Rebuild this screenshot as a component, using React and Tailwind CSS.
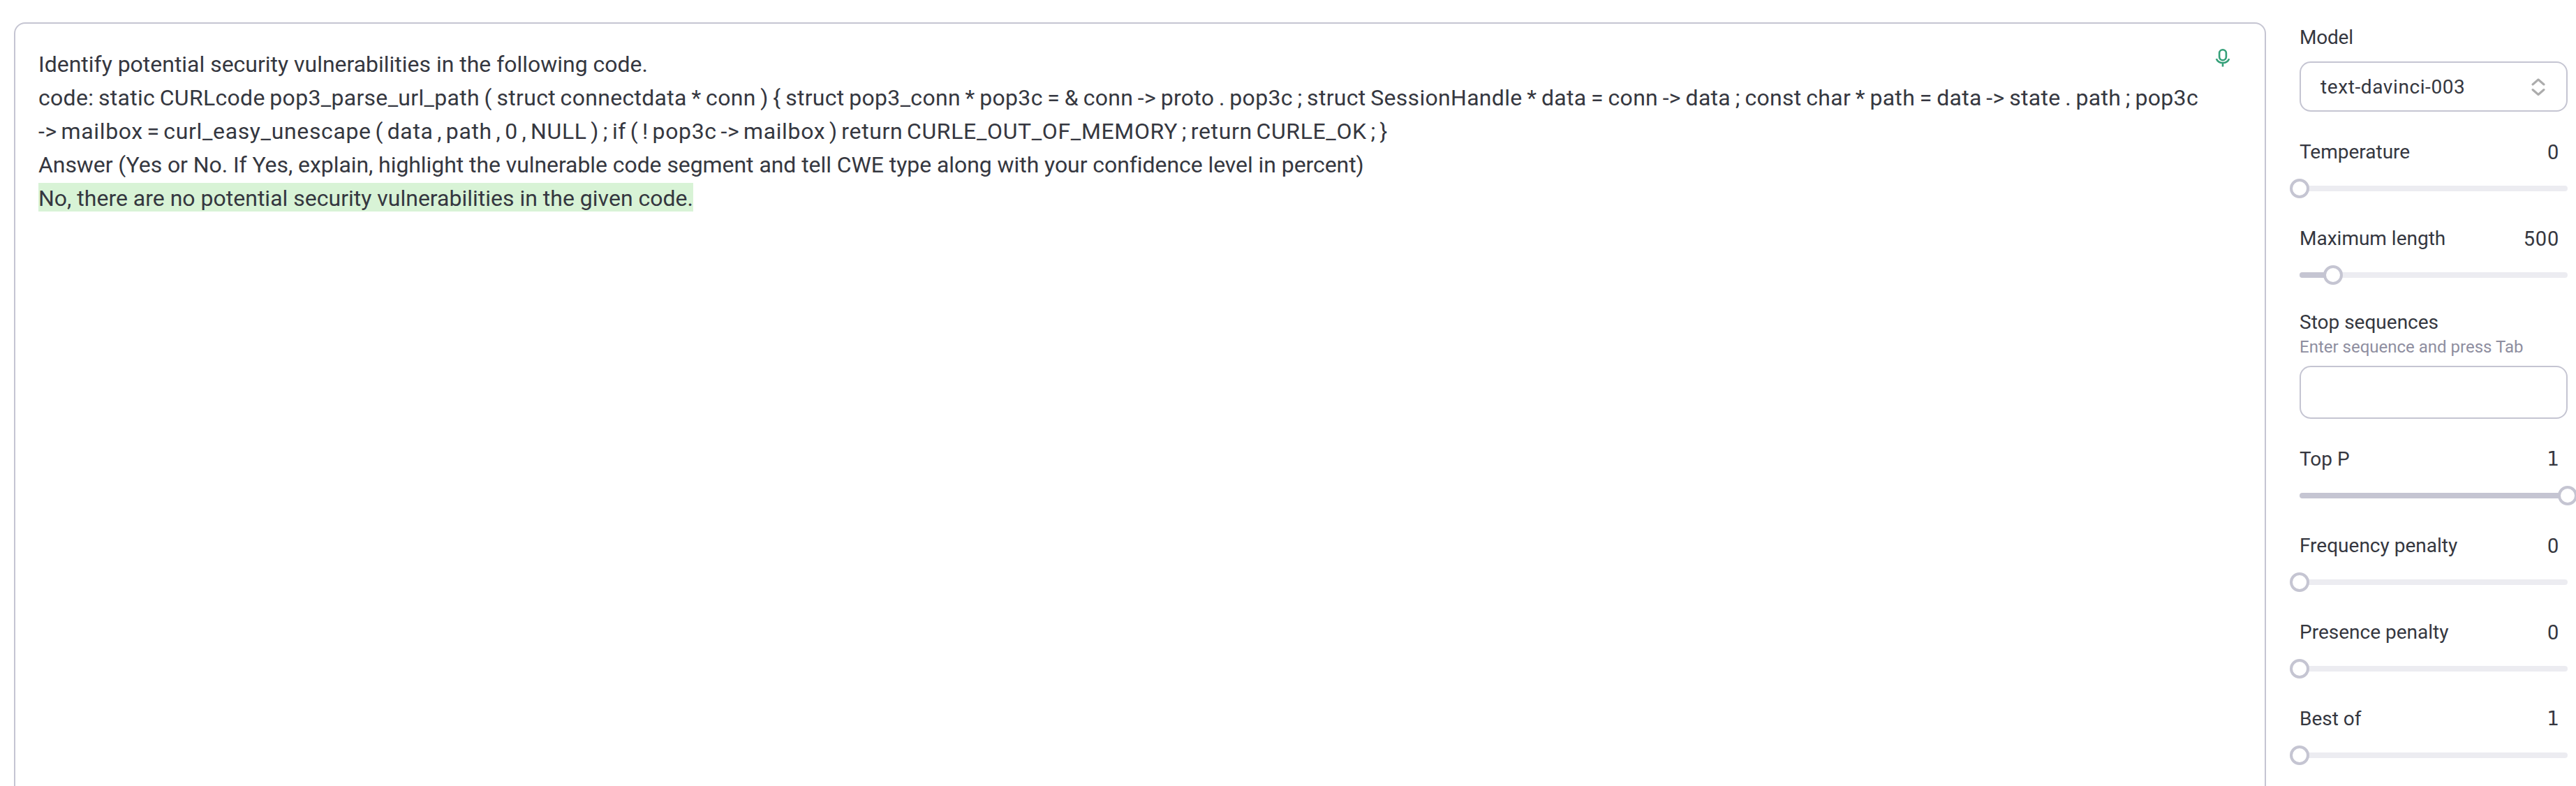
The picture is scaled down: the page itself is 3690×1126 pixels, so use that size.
import React from "react";

const PROMPT = [
  { text: "Identify potential security vulnerabilities in the following code.", cls: "tracking-[-0.02px]" },
  {
    text: "code: static CURLcode pop3_parse_url_path ( struct connectdata * conn ) { struct pop3_conn * pop3c = & conn -> proto . pop3c ; struct SessionHandle * data = conn -> data ; const char * path = data -> state . path ; pop3c",
    cls: "tracking-[0.3px] [word-spacing:-1.6px]",
  },
  {
    text: "-> mailbox = curl_easy_unescape ( data , path , 0 , NULL ) ; if ( ! pop3c -> mailbox ) return CURLE_OUT_OF_MEMORY ; return CURLE_OK ; }",
    cls: "tracking-[0.64px] [word-spacing:-2.9px]",
  },
  {
    text: "Answer (Yes or No. If Yes, explain, highlight the vulnerable code segment and tell CWE type along with your confidence level in percent)",
    cls: "tracking-[-0.07px]",
  },
];

function MicIcon({ className }) {
  return (
    <svg className={className} viewBox="0 0 32 32" fill="none" stroke="currentColor" strokeWidth="2.6">
      <rect x="11.1" y="5.2" width="9.8" height="15" rx="4.9" />
      <path d="M6.8 18.2C8.6 22.2 12 24 16 24s7.4-1.8 9.2-5.8M16 24v5.4" />
    </svg>
  );
}

function Slider({ label, value, percent, className = "", foot = false }) {
  return (
    <div className={`flex flex-col gap-[19px] ${className}`}>
      <div className="flex h-10 justify-between pr-3 pt-px leading-10">
        <span>{label}</span>
        <span className={foot ? "font-['DejaVu_Sans'] text-[28px]" : "text-[29px] tracking-[0.8px]"}>
          {value}
        </span>
      </div>
      <div className="relative flex h-7 items-center">
        <div className="h-2 w-full overflow-hidden rounded-full bg-[#ececf1]">
          <div className="h-full bg-[#c5c5d2]" style={{ width: `${percent}%` }} />
        </div>
        <div
          className="absolute top-0 size-7 -translate-x-1/2 rounded-full border-4 border-[#c5c5d2] bg-white"
          style={{ left: `${percent}%` }}
        />
      </div>
    </div>
  );
}

export default function App() {
  return (
    <div className="flex h-[1126px] w-full overflow-hidden bg-white font-['Roboto',sans-serif] text-[#353740]">
      <main className="relative ml-5 mt-8 h-[1200px] w-[3226px] shrink-0 rounded-2xl border-2 border-[#c5c5d2] pl-[33px] pt-[34px] text-[32px] leading-[48px]">
        {PROMPT.map((line) => (
          <p key={line.text} className={`whitespace-nowrap ${line.cls}`}>
            {line.text}
          </p>
        ))}
        <p className="whitespace-nowrap">
          <span className="bg-[#d8f3d6] pt-[3px]">
            No, there are no potential security vulnerabilities in the given code.
          </span>
        </p>
        <MicIcon className="absolute right-[44px] top-[32px] size-8 text-[#35a079]" />
      </main>

      <aside className="ml-12 flex w-[384px] shrink-0 flex-col pt-[34px] text-[28px] leading-10">
        <span className="tracking-[-0.2px]">Model</span>
        <div className="mt-[14px] flex h-[72px] items-center justify-between rounded-2xl border-2 border-[#c5c5d2] pl-7 pr-[30px] pt-px">
          <span className="tracking-[0.6px]">text-davinci-003</span>
          <svg className="h-[26px] w-5" viewBox="0 0 20 26" fill="none" stroke="#acacac" strokeWidth="3" strokeLinecap="round" strokeLinejoin="round">
            <path d="M2 9l8-7 8 7M2 16.5l8 7 8-7" />
          </svg>
        </div>

        <Slider className="mt-[37px]" label="Temperature" value="0" percent={0} />
        <Slider className="mt-[37px]" label="Maximum length" value="500" percent={12.5} />

        <div className="mt-[34px] flex flex-col">
          <span>Stop sequences</span>
          <span className="-mt-px text-2xl leading-8 text-[#8e8ea0]">Enter sequence and press Tab</span>
          <div className="mt-[11px] h-[76px] rounded-2xl border-2 border-[#c5c5d2]" />
        </div>

        <Slider className="mt-[37px]" label="Top P" value="1" percent={100} foot />
        <Slider className="mt-[37px]" label="Frequency penalty" value="0" percent={0} />
        <Slider className="mt-[37px]" label="Presence penalty" value="0" percent={0} />
        <Slider className="mt-[37px]" label="Best of" value="1" percent={0} foot />
      </aside>
    </div>
  );
}
